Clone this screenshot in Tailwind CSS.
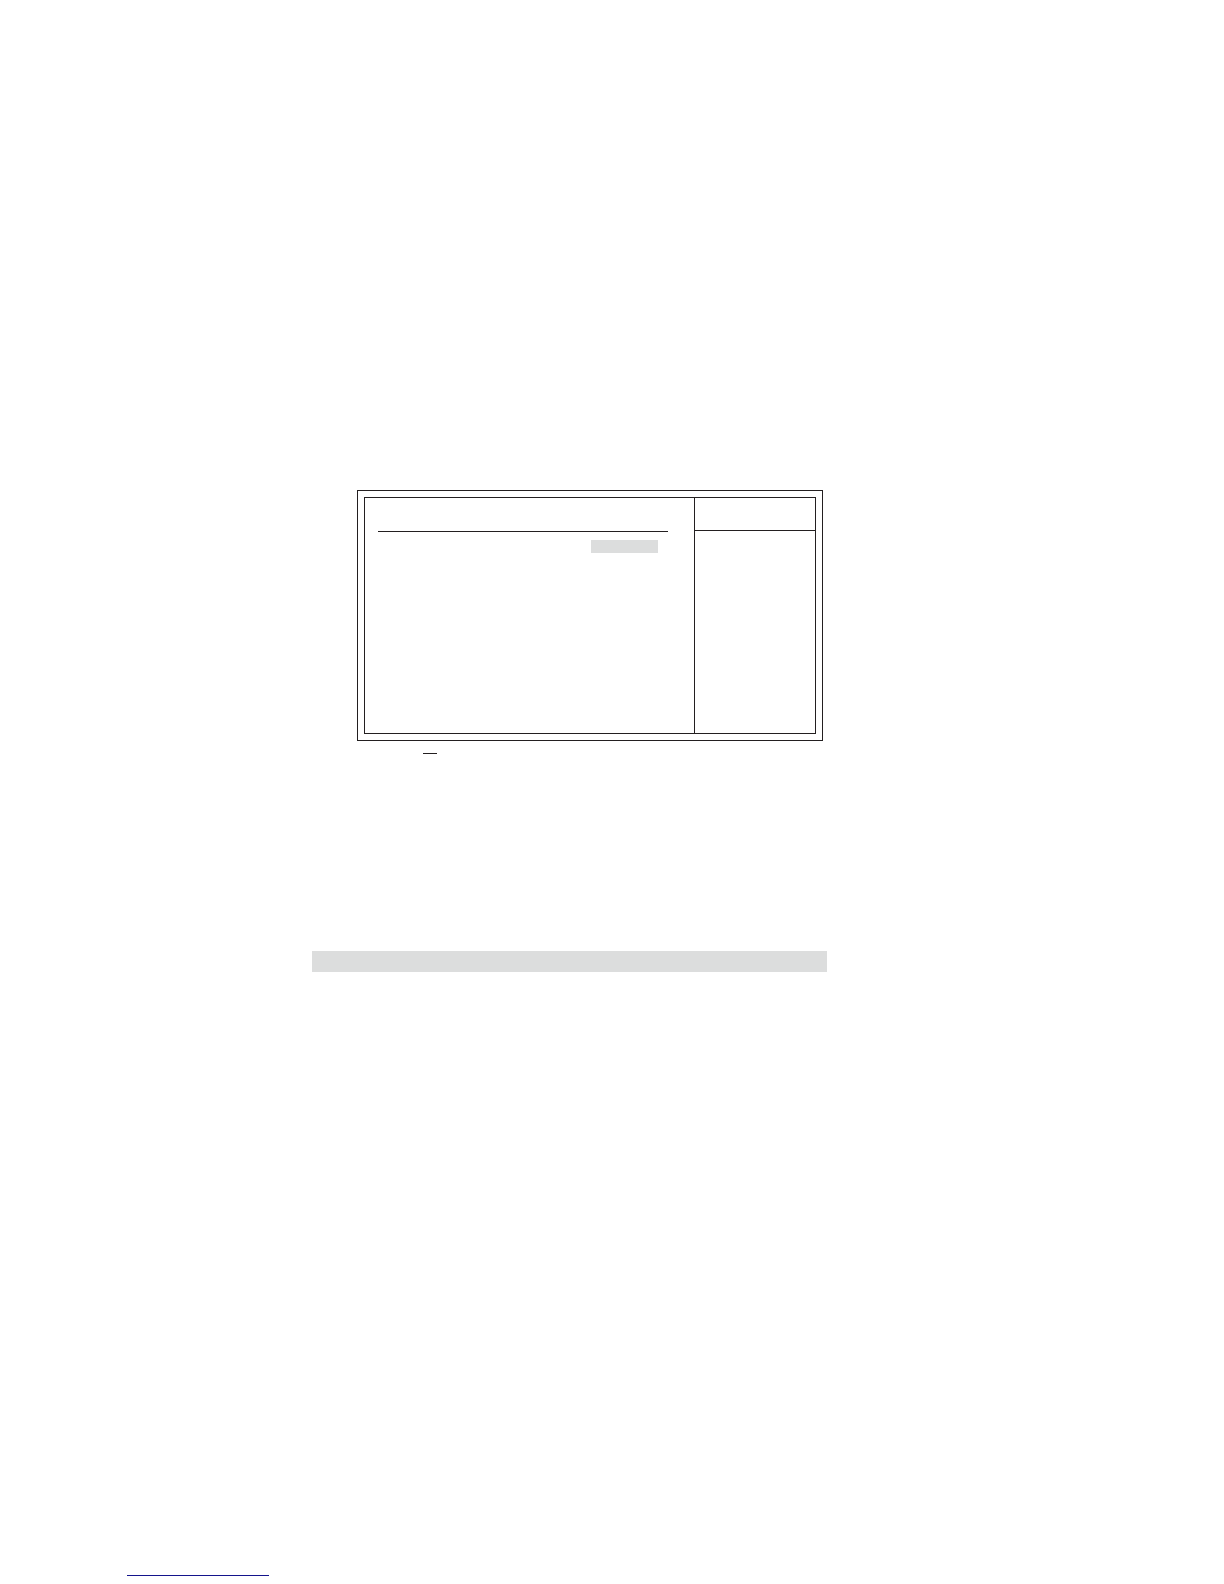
<!DOCTYPE html>
<html lang="en">
<head>
  <meta charset="UTF-8" />
  <meta name="viewport" content="width=device-width, initial-scale=1.0" />
  <title>Setup Screen</title>
  <script src="https://cdn.jsdelivr.net/npm/@tailwindcss/browser@4"></script>
</head>
<body class="min-h-screen bg-white font-['Liberation_Sans',sans-serif] text-[#231f20]">
  <main class="ml-[312px] max-w-[515px] pt-[490px]">
    <!-- setup screen -->
    <section class="ml-[45px] mr-1 border border-[#231f20] p-1.5">
      <div class="flex min-h-[237px] border border-[#231f20]">
        <div class="flex-1 pt-[33px]">
          <hr class="ml-[13px] mr-[26px] border-[#231f20]">
          <div class="mt-2 mr-9 ml-auto h-[13px] w-[67px] bg-[#dcdddd]"></div>
        </div>
        <aside class="w-[121px] border-l border-[#231f20]">
          <div class="h-[33px] border-b border-[#231f20]"></div>
        </aside>
      </div>
    </section>
    <hr class="mt-3 ml-[111px] w-3.5 border-[#231f20]">

    <!-- section heading bar -->
    <div class="mt-[197px] h-[21px] bg-[#dcdddd]"></div>
  </main>

  <footer class="mt-[603px] ml-[127px] pb-2">
    <div class="h-px w-[142px] bg-[#14148c]"></div>
  </footer>
</body>
</html>
